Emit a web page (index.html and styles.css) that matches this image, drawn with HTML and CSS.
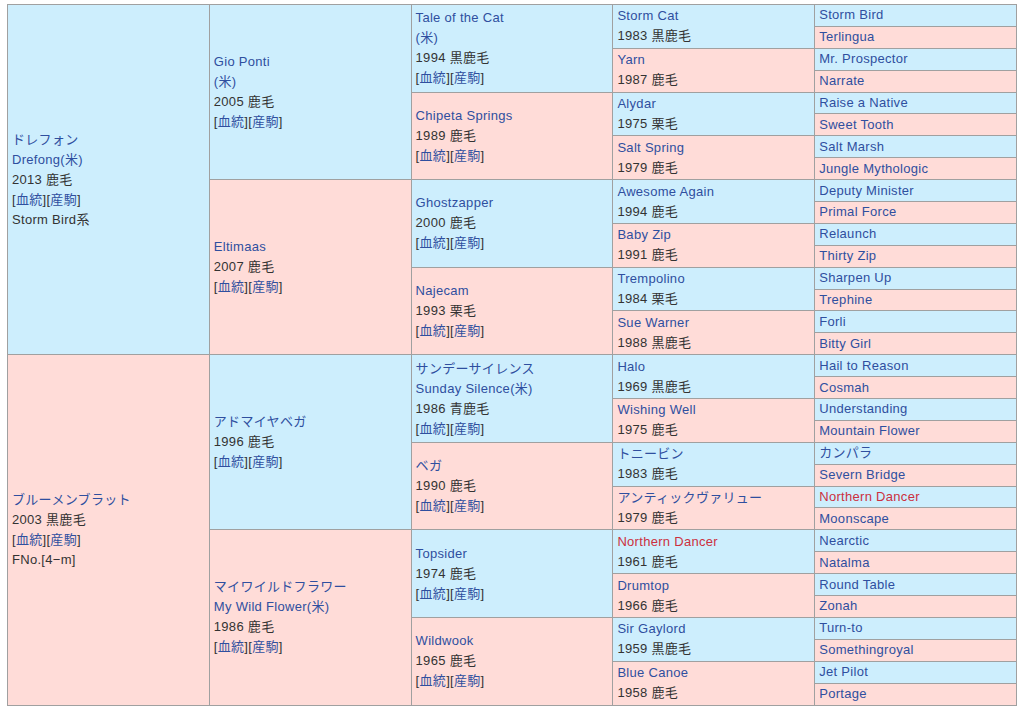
FILE: index.html
```html
<!DOCTYPE html>
<html lang="ja">
<head>
<meta charset="utf-8">
<title>血統表</title>
<link rel="stylesheet" href="styles.css">
</head>
<body>
<table class="ped">
<tr>
<td class="g1 b" rowspan="16"><a class="n">ドレフォン</a><br><a class="n">Drefong(米)</a><br>2013 鹿毛<br>[<a class="n">血統</a>][<a class="n">産駒</a>]<br>Storm Bird系</td>
<td class="g2 b" rowspan="8"><a class="n">Gio Ponti</a><br><a class="n">(米)</a><br>2005 鹿毛<br>[<a class="n">血統</a>][<a class="n">産駒</a>]</td>
<td class="g3 b" rowspan="4"><a class="n">Tale of the Cat</a><br><a class="n">(米)</a><br>1994 黒鹿毛<br>[<a class="n">血統</a>][<a class="n">産駒</a>]</td>
<td class="g4 b" rowspan="2"><a class="n">Storm Cat</a><br>1983 黒鹿毛</td>
<td class="g5 b"><a class="n">Storm Bird</a></td>
</tr>
<tr><td class="g5 p"><a class="n">Terlingua</a></td></tr>
<tr>
<td class="g4 p" rowspan="2"><a class="n">Yarn</a><br>1987 鹿毛</td>
<td class="g5 b"><a class="n">Mr. Prospector</a></td>
</tr>
<tr><td class="g5 p"><a class="n">Narrate</a></td></tr>
<tr>
<td class="g3 p" rowspan="4"><a class="n">Chipeta Springs</a><br>1989 鹿毛<br>[<a class="n">血統</a>][<a class="n">産駒</a>]</td>
<td class="g4 b" rowspan="2"><a class="n">Alydar</a><br>1975 栗毛</td>
<td class="g5 b"><a class="n">Raise a Native</a></td>
</tr>
<tr><td class="g5 p"><a class="n">Sweet Tooth</a></td></tr>
<tr>
<td class="g4 p" rowspan="2"><a class="n">Salt Spring</a><br>1979 鹿毛</td>
<td class="g5 b"><a class="n">Salt Marsh</a></td>
</tr>
<tr><td class="g5 p"><a class="n">Jungle Mythologic</a></td></tr>
<tr>
<td class="g2 p" rowspan="8"><a class="n">Eltimaas</a><br>2007 鹿毛<br>[<a class="n">血統</a>][<a class="n">産駒</a>]</td>
<td class="g3 b" rowspan="4"><a class="n">Ghostzapper</a><br>2000 鹿毛<br>[<a class="n">血統</a>][<a class="n">産駒</a>]</td>
<td class="g4 b" rowspan="2"><a class="n">Awesome Again</a><br>1994 鹿毛</td>
<td class="g5 b"><a class="n">Deputy Minister</a></td>
</tr>
<tr><td class="g5 p"><a class="n">Primal Force</a></td></tr>
<tr>
<td class="g4 p" rowspan="2"><a class="n">Baby Zip</a><br>1991 鹿毛</td>
<td class="g5 b"><a class="n">Relaunch</a></td>
</tr>
<tr><td class="g5 p"><a class="n">Thirty Zip</a></td></tr>
<tr>
<td class="g3 p" rowspan="4"><a class="n">Najecam</a><br>1993 栗毛<br>[<a class="n">血統</a>][<a class="n">産駒</a>]</td>
<td class="g4 b" rowspan="2"><a class="n">Trempolino</a><br>1984 栗毛</td>
<td class="g5 b"><a class="n">Sharpen Up</a></td>
</tr>
<tr><td class="g5 p"><a class="n">Trephine</a></td></tr>
<tr>
<td class="g4 p" rowspan="2"><a class="n">Sue Warner</a><br>1988 黒鹿毛</td>
<td class="g5 b"><a class="n">Forli</a></td>
</tr>
<tr><td class="g5 p"><a class="n">Bitty Girl</a></td></tr>
<tr>
<td class="g1 p" rowspan="16"><a class="n">ブルーメンブラット</a><br>2003 黒鹿毛<br>[<a class="n">血統</a>][<a class="n">産駒</a>]<br>FNo.[4−m]</td>
<td class="g2 b" rowspan="8"><a class="n">アドマイヤベガ</a><br>1996 鹿毛<br>[<a class="n">血統</a>][<a class="n">産駒</a>]</td>
<td class="g3 b" rowspan="4"><a class="n">サンデーサイレンス</a><br><a class="n">Sunday Silence(米)</a><br>1986 青鹿毛<br>[<a class="n">血統</a>][<a class="n">産駒</a>]</td>
<td class="g4 b" rowspan="2"><a class="n">Halo</a><br>1969 黒鹿毛</td>
<td class="g5 b"><a class="n">Hail to Reason</a></td>
</tr>
<tr><td class="g5 p"><a class="n">Cosmah</a></td></tr>
<tr>
<td class="g4 p" rowspan="2"><a class="n">Wishing Well</a><br>1975 鹿毛</td>
<td class="g5 b"><a class="n">Understanding</a></td>
</tr>
<tr><td class="g5 p"><a class="n">Mountain Flower</a></td></tr>
<tr>
<td class="g3 p" rowspan="4"><a class="n">ベガ</a><br>1990 鹿毛<br>[<a class="n">血統</a>][<a class="n">産駒</a>]</td>
<td class="g4 b" rowspan="2"><a class="n">トニービン</a><br>1983 鹿毛</td>
<td class="g5 b"><a class="n">カンパラ</a></td>
</tr>
<tr><td class="g5 p"><a class="n">Severn Bridge</a></td></tr>
<tr>
<td class="g4 p" rowspan="2"><a class="n">アンティックヴァリュー</a><br>1979 鹿毛</td>
<td class="g5 b"><a class="n r">Northern Dancer</a></td>
</tr>
<tr><td class="g5 p"><a class="n">Moonscape</a></td></tr>
<tr>
<td class="g2 p" rowspan="8"><a class="n">マイワイルドフラワー</a><br><a class="n">My Wild Flower(米)</a><br>1986 鹿毛<br>[<a class="n">血統</a>][<a class="n">産駒</a>]</td>
<td class="g3 b" rowspan="4"><a class="n">Topsider</a><br>1974 鹿毛<br>[<a class="n">血統</a>][<a class="n">産駒</a>]</td>
<td class="g4 b" rowspan="2"><a class="n r">Northern Dancer</a><br>1961 鹿毛</td>
<td class="g5 b"><a class="n">Nearctic</a></td>
</tr>
<tr><td class="g5 p"><a class="n">Natalma</a></td></tr>
<tr>
<td class="g4 p" rowspan="2"><a class="n">Drumtop</a><br>1966 鹿毛</td>
<td class="g5 b"><a class="n">Round Table</a></td>
</tr>
<tr><td class="g5 p"><a class="n">Zonah</a></td></tr>
<tr>
<td class="g3 p" rowspan="4"><a class="n">Wildwook</a><br>1965 鹿毛<br>[<a class="n">血統</a>][<a class="n">産駒</a>]</td>
<td class="g4 b" rowspan="2"><a class="n">Sir Gaylord</a><br>1959 黒鹿毛</td>
<td class="g5 b"><a class="n">Turn-to</a></td>
</tr>
<tr><td class="g5 p"><a class="n">Somethingroyal</a></td></tr>
<tr>
<td class="g4 p" rowspan="2"><a class="n">Blue Canoe</a><br>1958 鹿毛</td>
<td class="g5 b"><a class="n">Jet Pilot</a></td>
</tr>
<tr><td class="g5 p"><a class="n">Portage</a></td></tr>
</table>
</body>
</html>
```

FILE: styles.css
```css
html, body {
  margin: 0;
  background: #ffffff;
}
body {
  padding: 4px 0 0 7px;
  font-family: "Liberation Sans", "Noto Sans CJK JP", sans-serif;
  font-size: 13px;
  letter-spacing: 0.3px;
  color: #333333;
}
.ped {
  border-collapse: collapse;
  width: 1010px;
  table-layout: fixed;
  border: 1px solid #9a9a9a;
}
.ped td {
  border: 1px solid #a0a0a0;
  padding: 0 0 0 4px;
  vertical-align: middle;
  line-height: 20px;
  width: 20%;
  white-space: nowrap;
  overflow: hidden;
}
.ped td.g5 {
  height: 20.9px;
  line-height: 20px;
}
.b { background: #cdeefd; }
.p { background: #ffdcd8; }
.n { color: #2f4f9f; text-decoration: none; }
.n.r { color: #cc3040; }
```
